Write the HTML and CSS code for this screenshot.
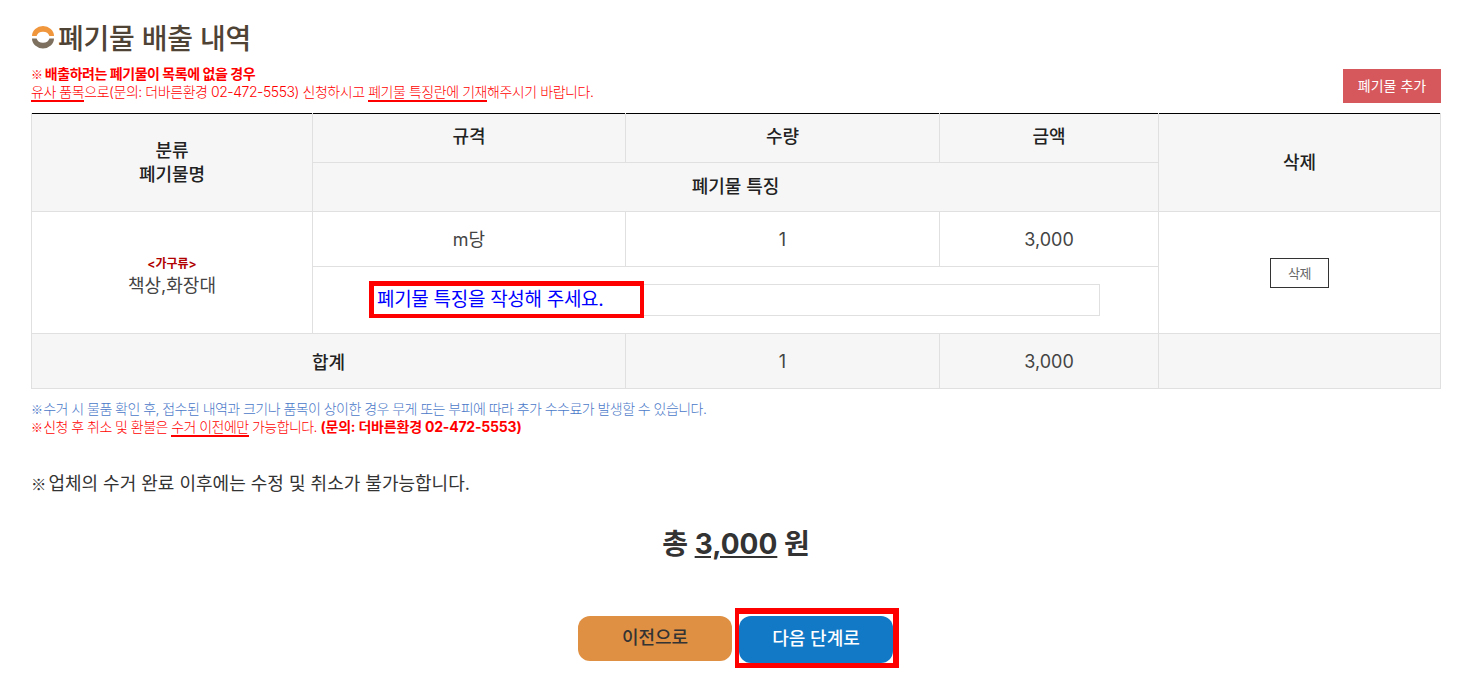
FILE: index.html
```html
<!DOCTYPE html>
<html lang="ko">
<head>
	<meta charset="UTF-8">
	<title>폐기물 배출 내역</title>
	<link rel="stylesheet" href="styles.css">
</head>
<body>
	<div class="container">
		<h2 class="title">
			<svg class="title-icon" width="24" height="24" viewBox="0 0 24 24">
				<path d="M1 11A11 10 0 0 1 23 11L18.4 11A6.6 5.6 0 0 0 5.6 11Z" fill="#f0963c"/>
				<path d="M1 13.5A11 10 0 0 0 23 13.5L18.4 13.5A6.6 5.6 0 0 1 5.6 13.5Z" fill="#7d705f"/>
			</svg>
			폐기물 배출 내역
		</h2>

		<div class="notice-row">
			<div class="notice">
				<p class="notice-strong"><span class="ref">※</span> 배출하려는 폐기물이 목록에 없을 경우</p>
				<p class="notice-light"><span class="mark">유사 품목</span>으로(문의: 더바른환경 02-472-5553) 신청하시고 <span class="mark">폐기물 특징란에 기재</span>해주시기 바랍니다.</p>
			</div>
			<a class="add-btn">폐기물 추가</a>
		</div>

		<table class="list">
			<colgroup>
				<col class="col-name">
				<col class="col-spec">
				<col class="col-qty">
				<col class="col-price">
				<col class="col-del">
			</colgroup>
			<tr class="head-row">
				<th rowspan="2">분류<br>폐기물명</th>
				<th class="head-top">규격</th>
				<th class="head-top">수량</th>
				<th class="head-top">금액</th>
				<th rowspan="2">삭제</th>
			</tr>
			<tr class="head-row">
				<th colspan="3">폐기물 특징</th>
			</tr>
			<tr class="item-row">
				<td class="name-cell" rowspan="2">
					<b class="category">&lt;가구류&gt;</b><br>
					책상,화장대
				</td>
				<td>m당</td>
				<td>1</td>
				<td>3,000</td>
				<td rowspan="2"><a class="del-btn">삭제</a></td>
			</tr>
			<tr class="memo-row">
				<td colspan="3">
					<div class="memo-input">폐기물 특징을 작성해 주세요.
						<span class="red-box memo-box"></span>
					</div>
				</td>
			</tr>
			<tr class="sum-row">
				<td colspan="2"><b>합계</b></td>
				<td>1</td>
				<td>3,000</td>
				<td></td>
			</tr>
		</table>

		<div class="guide">
			<p class="guide-blue"><span class="ref">※</span> 수거 시 물품 확인 후, 접수된 내역과 크기나 품목이 상이한 경우 무게 또는 부피에 따라 추가 수수료가 발생할 수 있습니다.</p>
			<p class="guide-red"><span class="ref">※</span> 신청 후 취소 및 환불은 <span class="mark">수거 이전에만</span> 가능합니다. <b>(문의: 더바른환경 02-472-5553)</b></p>
		</div>

		<p class="warn"><span class="ref">※</span> 업체의 수거 완료 이후에는 수정 및 취소가 불가능합니다.</p>

		<p class="total">총 <u>3,000</u> 원</p>

		<div class="buttons">
			<a class="btn btn-prev">이전으로</a>
			<a class="btn btn-next">다음 단계로
				<span class="red-box next-box"></span>
			</a>
		</div>
	</div>
</body>
</html>
```

FILE: styles.css
```css
* {
	box-sizing: border-box;
}

body {
	margin: 0;
	font-family: Inter, "Noto Sans CJK KR", sans-serif;
	color: #333;
	background: #fff;
}

p {
	margin: 0;
}

.container {
	height: 687px;
	overflow: hidden;
	padding: 18px 26px 0 31px;
}

.title {
	display: flex;
	align-items: center;
	gap: 3px;
	height: 38px;
	margin: 0;
	font-size: 28px;
	font-weight: 500;
	letter-spacing: -0.25px;
	color: #4f4336;
}

.title-icon {
	flex: none;
}

.ref {
	font-family: "Noto Sans CJK KR", sans-serif;
	font-size: 0.85em;
	font-weight: 500;
	line-height: 1;
	letter-spacing: -3px;
}

.notice-row {
	display: flex;
	justify-content: space-between;
	align-items: flex-end;
	margin-top: 8px;
	height: 39px;
}

.notice {
	font-size: 14px;
	line-height: 18px;
	color: #ff0000;
	padding-bottom: 2px;
}

.notice-strong {
	font-weight: 700;
	letter-spacing: -0.45px;
}

.notice-strong .ref {
	font-weight: 700;
	letter-spacing: -1px;
}

.notice-light {
	font-weight: 300;
	letter-spacing: -0.45px;
}

.mark {
	border-bottom: 2px solid #ff0000;
}

.add-btn {
	display: block;
	width: 98px;
	height: 34px;
	line-height: 34px;
	text-align: center;
	font-size: 14px;
	color: #fff;
	background: #d6585c;
}

.list {
	width: 1409px;
	margin-top: 10px;
	border-collapse: collapse;
	table-layout: fixed;
	border-top: 1px solid #000;
	font-size: 18px;
}

.col-name { width: 281px; }
.col-spec { width: 313px; }
.col-qty { width: 314px; }
.col-price { width: 219px; }
.col-del { width: 282px; }

.list th,
.list td {
	padding: 0;
	border: 1px solid #e0e0e0;
	text-align: center;
	vertical-align: middle;
}

.list tr:first-child th {
	border-top: 0;
}

.list th {
	font-size: 18px;
	font-weight: 500;
	line-height: 24px;
	color: #222;
	background: #f6f6f6;
}

.list th.head-top {
	padding-bottom: 2px;
}

.head-row {
	height: 49px;
}

.item-row {
	height: 55px;
	color: #444;
}

.list .item-row td {
	padding-top: 2px;
	font-weight: 400;
	line-height: 24px;
}

.list .item-row td.name-cell {
	padding-top: 3px;
}

.list .item-row td:last-child {
	padding-top: 0;
}

.category {
	display: inline-block;
	font-size: 12px;
	line-height: 14px;
	color: #b00000;
}

.memo-row {
	height: 67px;
}

.memo-input {
	position: relative;
	width: 730px;
	height: 32px;
	margin-left: 57px;
	padding-left: 6px;
	border: 1px solid #e0e0e0;
	line-height: 30px;
	text-align: left;
	font-size: 19px;
	letter-spacing: -0.3px;
	color: #0000ff;
}

.red-box {
	position: absolute;
	border: 4px solid #ff0000;
}

.memo-box {
	left: -2px;
	top: -4px;
	width: 275px;
	height: 37px;
	border-width: 5px 4px 4px 5px;
}

.del-btn {
	display: inline-block;
	width: 59px;
	height: 30px;
	line-height: 28px;
	font-size: 13px;
	letter-spacing: -0.5px;
	color: #666;
	border: 1px solid #333;
}

.sum-row {
	height: 55px;
	background: #f6f6f6;
	color: #444;
}

.sum-row b {
	font-size: 18px;
	font-weight: 500;
	color: #222;
}

.guide {
	margin-top: 11px;
	font-size: 14px;
	line-height: 18px;
	font-weight: 300;
	letter-spacing: -0.55px;
}

.guide-blue {
	color: #4a78c8;
}

.guide-red {
	color: #ff0000;
}

.guide-red b {
	font-weight: 700;
	font-size: 14px;
	letter-spacing: -0.2px;
}

.warn {
	margin-top: 35px;
	font-size: 18px;
	line-height: 26px;
	font-weight: 400;
}

.total {
	margin-top: 26px;
	text-align: center;
	font-size: 28px;
	line-height: 42px;
	font-weight: 700;
	color: #333;
}

.buttons {
	display: flex;
	justify-content: flex-start;
	align-items: flex-start;
	gap: 7px;
	margin-top: 51px;
	margin-left: 547px;
}

.btn {
	position: relative;
	display: block;
	width: 154px;
	text-align: center;
	font-size: 18px;
	font-weight: 500;
	border-radius: 12px;
}

.btn-prev {
	height: 45px;
	line-height: 43px;
	background: #df9043;
	color: #333;
}

.btn-next {
	height: 47px;
	line-height: 45px;
	background: #1279c6;
	color: #fff;
}

.next-box {
	left: -4px;
	top: -8px;
	width: 164px;
	height: 60px;
	border-width: 6px 6px 5px 4px;
}
```
